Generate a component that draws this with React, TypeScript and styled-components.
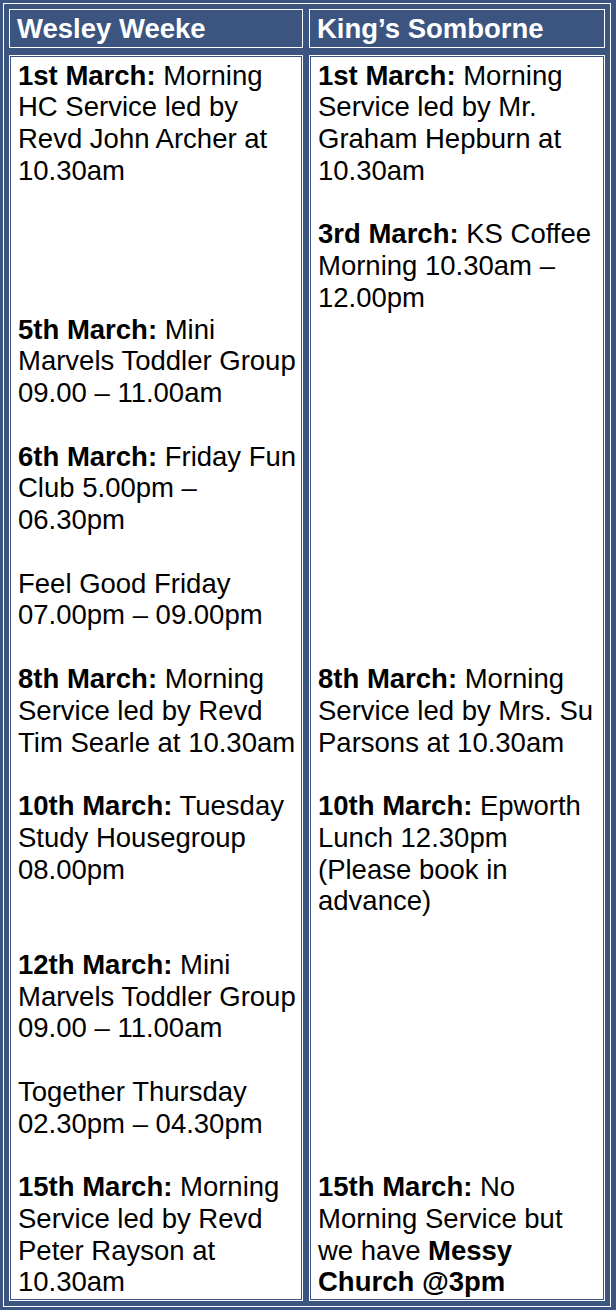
import React from "react";
import styled, { createGlobalStyle } from "styled-components";

const BLUE = "#3b5580";
const LINE = 31.76;

const Global = createGlobalStyle`
  html, body { margin: 0; padding: 0; background: ${BLUE}; }
  body { font-family: "Liberation Sans", Arial, sans-serif; }
`;

const Frame = styled.div`
  width: 616px;
  height: 1310px;
  box-sizing: border-box;
  background: ${BLUE};
  padding: 3px 5px 3px 3px;
`;

const Table = styled.div`
  box-sizing: border-box;
  height: 100%;
  border: 1px solid #fff;
  padding: 5px;
  display: grid;
  grid-template-columns: 294px 296px;
  grid-template-rows: 39px 1fr;
  column-gap: 6px;
  row-gap: 7px;
`;

const HeadCell = styled.div`
  box-sizing: border-box;
  border: 1px solid #fff;
  background: ${BLUE};
  color: #fff;
  font-weight: bold;
  font-size: 27.5px;
  line-height: 37px;
  padding: 0 7px;
  white-space: nowrap;
`;

const BodyCell = styled.div`
  box-sizing: border-box;
  border: 1px solid #fff;
  box-shadow: inset 0 0 0 1px ${BLUE};
  background: #fff;
  color: #000;
  font-size: 27.5px;
  line-height: ${LINE}px;
  padding: 3.5px 8px 0 8px;
`;

const Entry = styled.p`
  margin: 0;
  white-space: nowrap;
`;

const Spacer = styled.div<{ $lines: number }>`
  height: ${(p) => p.$lines * LINE}px;
`;

type Item = { lines: React.ReactNode[] } | { gap: number };

const B = styled.b`
  font-weight: bold;
`;

const left: Item[] = [
  { lines: [<><B>1st March:</B> Morning</>, "HC Service led by", "Revd John Archer at", "10.30am"] },
  { gap: 4 },
  { lines: [<><B>5th March:</B> Mini</>, "Marvels Toddler Group", "09.00 – 11.00am"] },
  { gap: 1 },
  { lines: [<><B>6th March:</B> Friday Fun</>, "Club 5.00pm –", "06.30pm"] },
  { gap: 1 },
  { lines: ["Feel Good Friday", "07.00pm – 09.00pm"] },
  { gap: 1 },
  { lines: [<><B>8th March:</B> Morning</>, "Service led by Revd", "Tim Searle at 10.30am"] },
  { gap: 1 },
  { lines: [<><B>10th March:</B> Tuesday</>, "Study Housegroup", "08.00pm"] },
  { gap: 2 },
  { lines: [<><B>12th March:</B> Mini</>, "Marvels Toddler Group", "09.00 – 11.00am"] },
  { gap: 1 },
  { lines: ["Together Thursday", "02.30pm – 04.30pm"] },
  { gap: 1 },
  { lines: [<><B>15th March:</B> Morning</>, "Service led by Revd", "Peter Rayson at", "10.30am"] },
];

const right: Item[] = [
  { lines: [<><B>1st March:</B> Morning</>, "Service led by Mr.", "Graham Hepburn at", "10.30am"] },
  { gap: 1 },
  { lines: [<><B>3rd March:</B> KS Coffee</>, "Morning 10.30am –", "12.00pm"] },
  { gap: 11 },
  { lines: [<><B>8th March:</B> Morning</>, "Service led by Mrs. Su", "Parsons at 10.30am"] },
  { gap: 1 },
  { lines: [<><B>10th March:</B> Epworth</>, "Lunch 12.30pm", "(Please book in", "advance)"] },
  { gap: 8 },
  { lines: [<><B>15th March:</B> No</>, "Morning Service but", <>we have <B>Messy</B></>, <B>Church @3pm</B>] },
];

function Column({ items }: { items: Item[] }) {
  return (
    <BodyCell>
      {items.map((it, i) =>
        "gap" in it ? (
          <Spacer key={i} $lines={it.gap} />
        ) : (
          <Entry key={i}>
            {it.lines.map((l, j) => (
              <React.Fragment key={j}>
                {j > 0 && <br />}
                {l}
              </React.Fragment>
            ))}
          </Entry>
        )
      )}
    </BodyCell>
  );
}

export default function App() {
  return (
    <>
      <Global />
      <Frame>
        <Table>
          <HeadCell>Wesley Weeke</HeadCell>
          <HeadCell>King’s Somborne</HeadCell>
          <Column items={left} />
          <Column items={right} />
        </Table>
      </Frame>
    </>
  );
}
